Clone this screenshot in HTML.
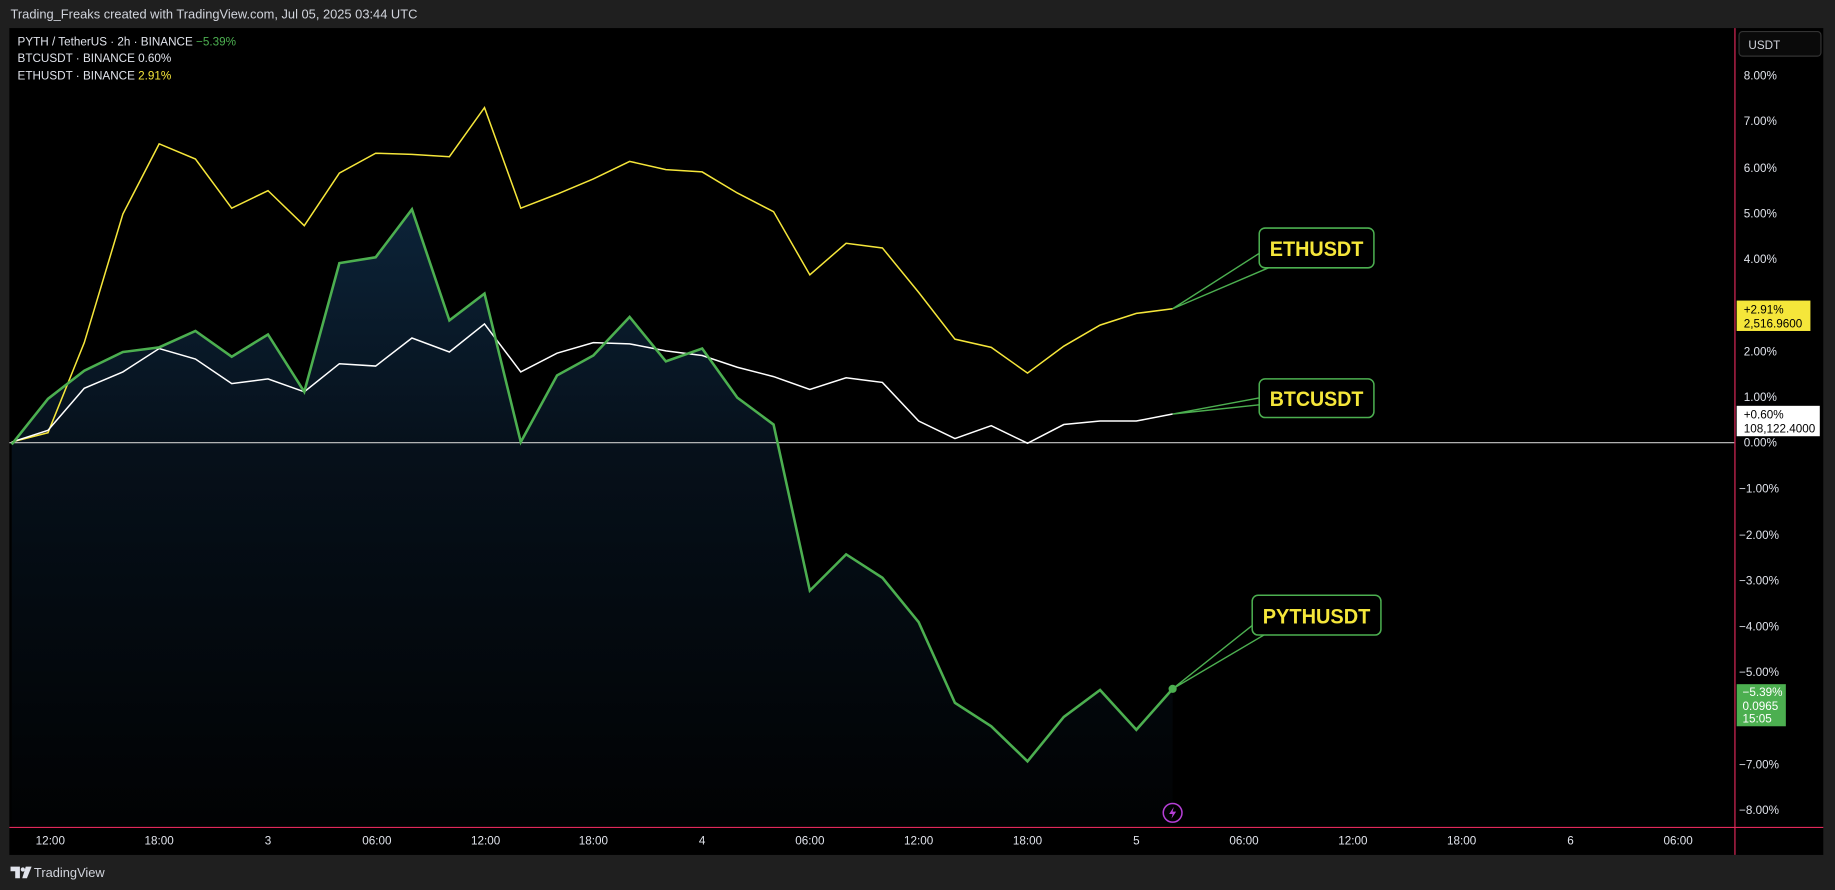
<!DOCTYPE html>
<html><head><meta charset="utf-8"><style>
html,body{margin:0;padding:0;background:#1e1e1e;overflow:hidden}
svg{display:block}
text{font-family:"Liberation Sans",sans-serif}
</style></head><body>
<svg width="1835" height="890" viewBox="0 0 1568 761" preserveAspectRatio="none">
<defs>
<linearGradient id="g" x1="0" y1="0" x2="0" y2="1">
<stop offset="0" stop-color="#0c2338"/><stop offset="0.4" stop-color="#06101a"/><stop offset="1" stop-color="#010203"/>
</linearGradient>
</defs>
<rect width="1568" height="761" fill="#1f1f1f"/>
<text x="9" y="16" font-size="11" fill="#d1d4dc">Trading_Freaks created with TradingView.com, Jul 05, 2025 03:44 UTC</text>
<rect x="8" y="24" width="1550" height="707" fill="#000"/>
<polygon fill="url(#g)" points="10,380 41,341 72,317 105,301 136,297 167,283 198,305 229,286 260,335 290,225 321,220 352,179 384,274 414,251 445,378 476,321 507,304 538,271 569,309 600,298 630,340 661,363 692,505 723,474 754,494 785,532 816,601 847,621 878,651 909,613 940,590 971,624 1002,589 1002,707 10,707"/>
<line x1="8" y1="378.5" x2="1482" y2="378.5" stroke="#c9c9c9" stroke-width="1"/>
<polyline fill="none" stroke="#f5e63a" stroke-width="1.3" points="10,378 41,370 72,293 105,183 136,123 167,136 198,178 229,163 260,193 290,148 321,131 352,132 384,134 414,92 445,178 476,166 507,153 538,138 569,145 600,147 630,165 661,181 692,235 723,208 754,212 785,250 816,290 847,297 878,319 909,296 940,278 971,268 1002,264"/>
<polyline fill="none" stroke="#ffffff" stroke-width="1.3" points="10,378 41,368 72,332 105,318 136,298 167,307 198,328 229,324 260,335 290,311 321,313 352,289 384,301 414,277 445,318 476,302 507,293 538,294 569,300 600,304 630,314 661,322 692,333 723,323 754,327 785,360 816,375 847,364 878,379 909,363 940,360 971,360 1002,354"/>
<polyline fill="none" stroke="#4caf50" stroke-width="2.2" points="10,380 41,341 72,317 105,301 136,297 167,283 198,305 229,286 260,335 290,225 321,220 352,179 384,274 414,251 445,378 476,321 507,304 538,271 569,309 600,298 630,340 661,363 692,505 723,474 754,494 785,532 816,601 847,621 878,651 909,613 940,590 971,624 1002,589"/>
<circle cx="1002" cy="589" r="3.5" fill="#4caf50"/>
<g stroke="#4caf50" stroke-width="1.2" fill="none">
<path d="M1002,264 L1077,216 M1002,264 L1084,229"/>
<path d="M1002,354 L1077,340 M1002,354 L1077,346"/>
<path d="M1002,589 L1071,534 M1002,589 L1080,543"/>
</g>
<g stroke="#4caf50" stroke-width="1.3" fill="#000">
<rect x="1076" y="195" width="98" height="34" rx="5"/>
<rect x="1076" y="324" width="98" height="33" rx="5"/>
<rect x="1070" y="509" width="110" height="34" rx="5"/>
</g>
<g font-size="18" font-weight="bold" fill="#f5e63a" text-anchor="middle">
<text x="1125" y="219" textLength="80" lengthAdjust="spacingAndGlyphs">ETHUSDT</text>
<text x="1125" y="347" textLength="80" lengthAdjust="spacingAndGlyphs">BTCUSDT</text>
<text x="1125" y="533" textLength="92" lengthAdjust="spacingAndGlyphs">PYTHUSDT</text>
</g>
<g font-size="10" fill="#e0e3eb">
<text x="15" y="39">PYTH / TetherUS · 2h · BINANCE <tspan fill="#4caf50">−5.39%</tspan></text>
<text x="15" y="53">BTCUSDT · BINANCE 0.60%</text>
<text x="15" y="68">ETHUSDT · BINANCE <tspan fill="#f5e63a">2.91%</tspan></text>
</g>
<line x1="1482.5" y1="24" x2="1482.5" y2="731" stroke="#e0285a"/>
<line x1="8" y1="707.5" x2="1558" y2="707.5" stroke="#e0285a"/>
<rect x="1486" y="27" width="70" height="21" rx="3" fill="#0a0a0a" stroke="#333"/>
<text x="1494" y="42" font-size="10" fill="#d1d4dc">USDT</text>
<g font-size="10" fill="#e0e3eb">
<text x="1490" y="68">8.00%</text><text x="1490" y="107">7.00%</text><text x="1490" y="147">6.00%</text>
<text x="1490" y="186">5.00%</text><text x="1490" y="225">4.00%</text><text x="1490" y="304">2.00%</text>
<text x="1490" y="343">1.00%</text><text x="1490" y="382">0.00%</text><text x="1486" y="421">−1.00%</text>
<text x="1486" y="461">−2.00%</text><text x="1486" y="500">−3.00%</text><text x="1486" y="539">−4.00%</text>
<text x="1486" y="578">−5.00%</text><text x="1486" y="657">−7.00%</text><text x="1486" y="696">−8.00%</text>
</g>
<rect x="1484" y="257" width="63" height="26" fill="#f5e63a"/>
<text x="1490" y="268" font-size="10" fill="#000">+2.91%</text>
<text x="1490" y="280" font-size="10" fill="#000">2,516.9600</text>
<rect x="1484" y="347" width="71" height="26" fill="#fff"/>
<text x="1490" y="358" font-size="10" fill="#000">+0.60%</text>
<text x="1490" y="370" font-size="10" fill="#000">108,122.4000</text>
<rect x="1484" y="585" width="42" height="36" fill="#4caf50"/>
<g font-size="10" fill="#fff"><text x="1489" y="595">−5.39%</text><text x="1489" y="607">0.0965</text><text x="1489" y="618">15:05</text></g>
<g font-size="10" fill="#e0e3eb" text-anchor="middle">
<text x="43" y="722">12:00</text><text x="136" y="722">18:00</text><text x="229" y="722">3</text>
<text x="322" y="722">06:00</text><text x="415" y="722">12:00</text><text x="507" y="722">18:00</text>
<text x="600" y="722">4</text><text x="692" y="722">06:00</text><text x="785" y="722">12:00</text>
<text x="878" y="722">18:00</text><text x="971" y="722">5</text><text x="1063" y="722">06:00</text>
<text x="1156" y="722">12:00</text><text x="1249" y="722">18:00</text><text x="1342" y="722">6</text>
<text x="1434" y="722">06:00</text>
</g>
<circle cx="1002" cy="695" r="8" fill="none" stroke="#b63fd6" stroke-width="1.3"/>
<path d="M1003,690 L999,696 L1002,696 L1001,700 L1005,694 L1002,694 Z" fill="#b63fd6"/>
<path d="M9,741 h8 v10 h-4 v-6 h-4 z" fill="#e0e3eb"/>
<circle cx="19.5" cy="743.5" r="1.8" fill="#e0e3eb"/>
<path d="M22,741 h5 l-4,10 h-4 z" fill="#e0e3eb"/>
<text x="29" y="750" font-size="11" fill="#d1d4dc">TradingView</text>
</svg>
</body></html>
